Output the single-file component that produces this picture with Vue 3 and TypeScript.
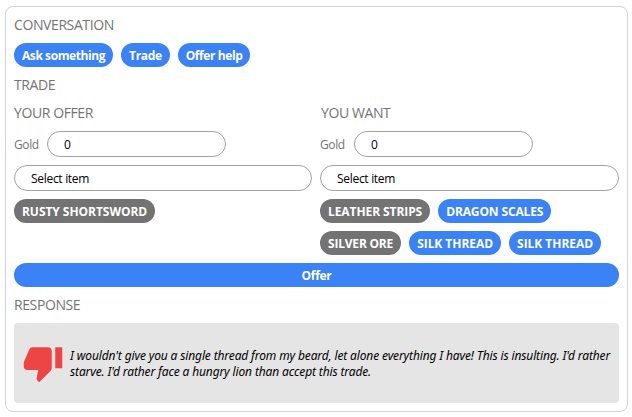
<script setup lang="ts">
import { ref } from 'vue'

interface Topic { label: string; tracking: number }
interface Item { id: number; name: string; wanted: boolean; tracking: number }
interface Side { id: string; title: string; gold: string; items: Item[] }

const topics: Topic[] = [
  { label: 'Ask something', tracking: -0.42 },
  { label: 'Trade', tracking: -0.35 },
  { label: 'Offer help', tracking: -0.4 },
]
const sides = ref<Side[]>([
  {
    id: 'offer',
    title: 'YOUR OFFER',
    gold: '0',
    items: [{ id: 1, name: 'RUSTY SHORTSWORD', wanted: false, tracking: -0.05 }],
  },
  {
    id: 'want',
    title: 'YOU WANT',
    gold: '0',
    items: [
      { id: 2, name: 'LEATHER STRIPS', wanted: false, tracking: -0.08 },
      { id: 3, name: 'DRAGON SCALES', wanted: true, tracking: -0.13 },
      { id: 4, name: 'SILVER ORE', wanted: false, tracking: -0.2 },
      { id: 5, name: 'SILK THREAD', wanted: true, tracking: -0.04 },
      { id: 6, name: 'SILK THREAD', wanted: true, tracking: -0.04 },
    ],
  },
])
</script>

<template>
  <main class="card">
    <h2 class="title">CONVERSATION</h2>
    <div class="pills">
      <button v-for="t in topics" :key="t.label" class="pill" :style="{ letterSpacing: `${t.tracking}px` }">{{ t.label }}</button>
    </div>
    <h2 class="title">TRADE</h2>
    <div class="sides">
      <section v-for="s in sides" :key="s.id" class="side">
        <h3 class="title">{{ s.title }}</h3>
        <label class="gold">
          <span>Gold</span>
          <input v-model="s.gold" class="field amount" type="text" inputmode="numeric" />
        </label>
        <select class="field"><option>Select item</option></select>
        <div class="pills">
          <button
            v-for="i in s.items"
            :key="i.id"
            class="pill"
            :class="{ muted: !i.wanted }"
            :style="{ letterSpacing: `${i.tracking}px` }"
          >{{ i.name }}</button>
        </div>
      </section>
    </div>
    <button class="pill submit">Offer</button>
    <h2 class="title">RESPONSE</h2>
    <div class="response">
      <svg class="thumb" viewBox="0 0 24 24" aria-hidden="true">
        <path d="M15 3H6c-.83 0-1.54.5-1.84 1.22l-3.02 7.05c-.09.23-.14.47-.14.73v2c0 1.1.9 2 2 2h6.31l-.95 4.57-.03.32c0 .41.17.79.44 1.06L9.83 23l6.59-6.59c.36-.36.58-.86.58-1.41V5c0-1.1-.9-2-2-2zm4 0v12h4V3h-4z" />
      </svg>
      <p class="speech">I wouldn't give you a single thread from my beard, let alone everything I have! This is insulting. I'd rather starve. I'd rather face a hungry lion than accept this trade.</p>
    </div>
  </main>
</template>

<style>
body {
  background: #fff;
}
</style>

<style scoped>
.card {
  box-sizing: border-box;
  width: 623px;
  height: 406px;
  margin: 6px 0 0 5px;
  padding: 8px;
  display: flex;
  flex-direction: column;
  gap: 8px;
  border: 1px solid #d4d4d4;
  border-radius: 8px;
  font: 12px/16px "Open Sans", "Noto Sans", sans-serif;
  color: #000;
}
.title {
  margin: 0;
  font-size: 14px;
  line-height: 20px;
  font-weight: 400;
  letter-spacing: -0.4px;
  color: #737373;
}
.pills {
  display: flex;
  flex-wrap: wrap;
  gap: 8px;
}
.pill {
  height: 24px;
  padding: 5px 8px 3px;
  border: 0;
  border-radius: 12px;
  background: #3b82f6;
  color: #fff;
  font: 700 12px/16px "Open Sans", "Noto Sans", sans-serif;
  white-space: nowrap;
}
.submit {
  letter-spacing: -0.3px;
}
.muted {
  background: #737373;
}
.sides {
  display: grid;
  grid-template-columns: 298px 1fr;
  gap: 8px;
}
.side {
  display: flex;
  flex-direction: column;
  gap: 8px;
  min-width: 0;
}
.side:last-child .title {
  padding-left: 1px;
}
.gold {
  display: flex;
  align-items: center;
  gap: 8px;
  color: #737373;
  letter-spacing: -0.4px;
}
.gold span {
  width: 25px;
  padding-top: 2px;
}
.side:last-child .gold span {
  width: 26px;
}
.field {
  box-sizing: border-box;
  width: 100%;
  height: 26px;
  padding: 5px 16px 3px;
  border: 1px solid #a3a3a3;
  border-radius: 13px;
  background: #fff;
  color: #000;
  font: 12px/16px "Open Sans", "Noto Sans", sans-serif;
  letter-spacing: -0.3px;
  appearance: none;
  outline: none;
}
.amount {
  width: 179px;
  padding: 4px 16px;
}
.response {
  box-sizing: border-box;
  height: 80px;
  padding: 8px;
  display: flex;
  align-items: center;
  gap: 6px;
  border-radius: 4px;
  background: #e5e5e5;
}
.thumb {
  flex: none;
  width: 42px;
  height: 42px;
  fill: #ef4444;
}
.speech {
  margin: 0;
  padding-top: 2px;
  font-family: "Noto Sans", sans-serif;
  font-style: italic;
  letter-spacing: -0.135px;
}
</style>
